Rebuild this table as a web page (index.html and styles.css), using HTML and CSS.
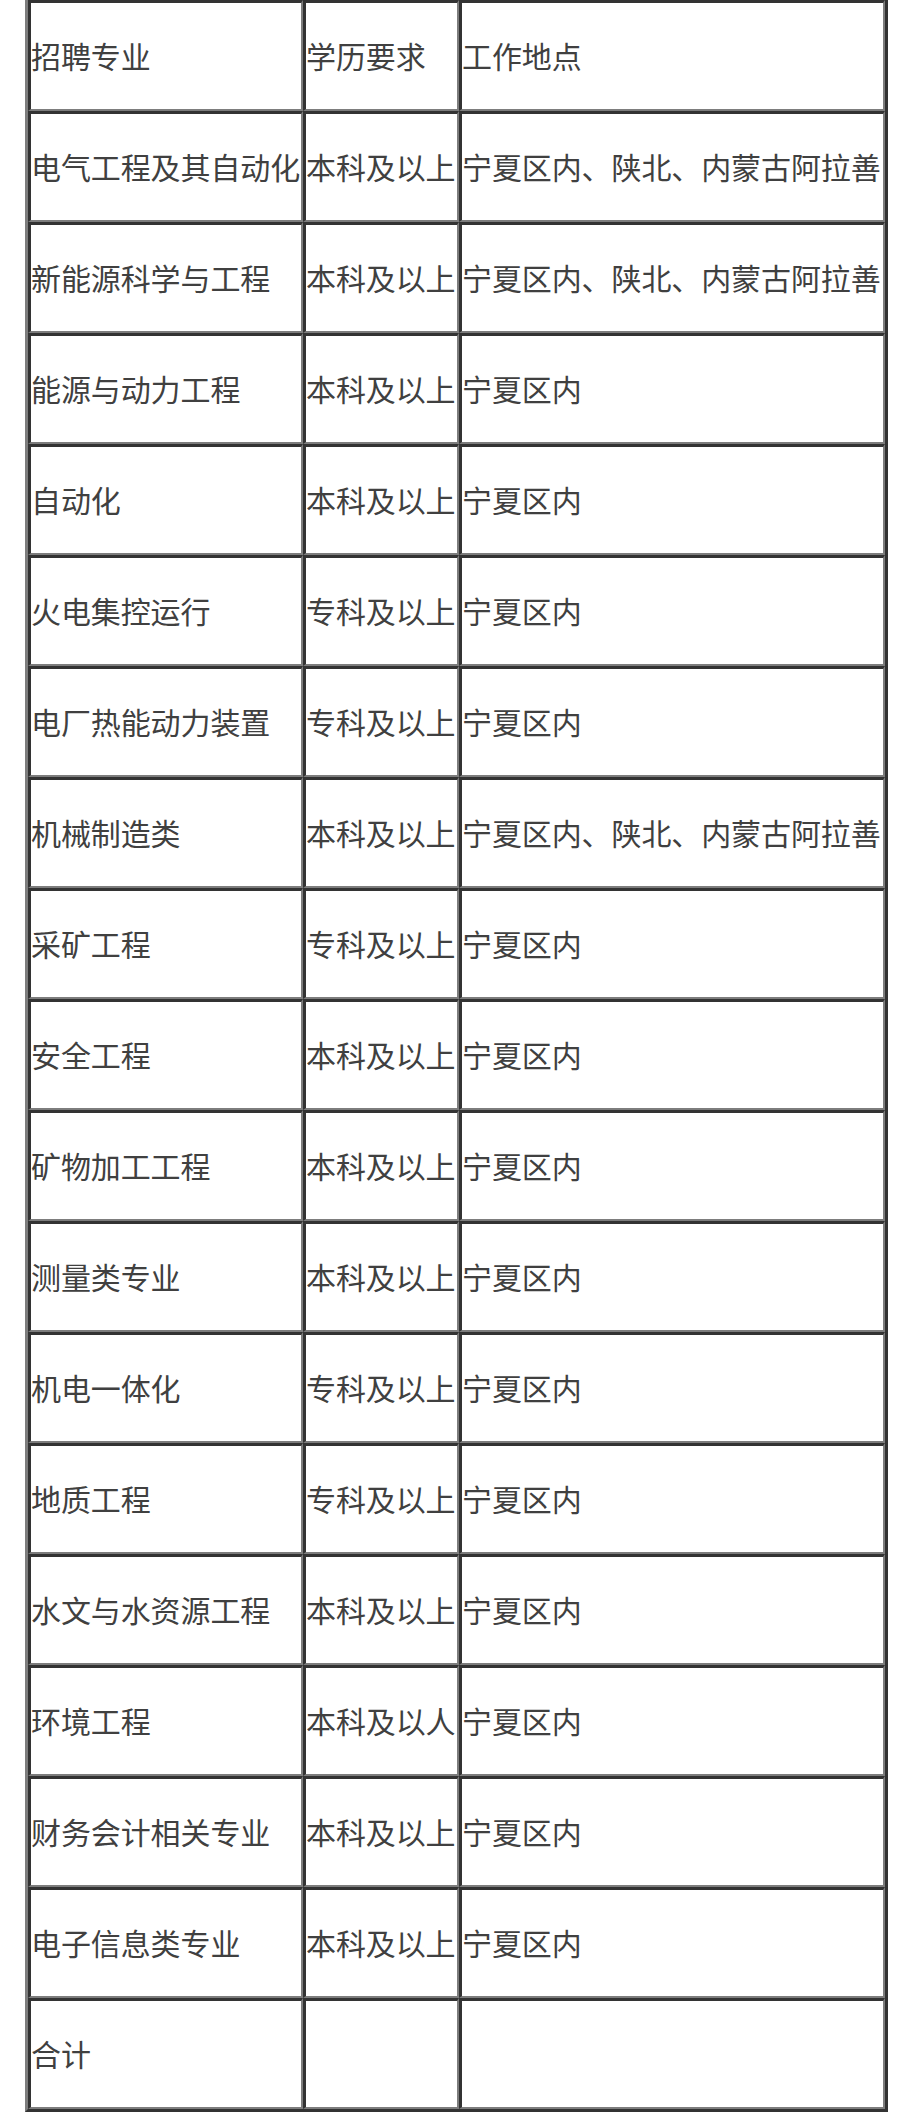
FILE: index.html
```html
<!DOCTYPE html>
<html lang="zh-CN">
<head>
<meta charset="utf-8">
<title>招聘专业</title>
<link rel="stylesheet" href="styles.css">
</head>
<body>
<table class="jobs">
  <colgroup>
    <col class="c-major">
    <col class="c-edu">
    <col class="c-loc">
  </colgroup>
  <tbody>
    <tr><td>招聘专业</td><td>学历要求</td><td>工作地点</td></tr>
    <tr><td>电气工程及其自动化</td><td>本科及以上</td><td>宁夏区内、陕北、内蒙古阿拉善</td></tr>
    <tr><td>新能源科学与工程</td><td>本科及以上</td><td>宁夏区内、陕北、内蒙古阿拉善</td></tr>
    <tr><td>能源与动力工程</td><td>本科及以上</td><td>宁夏区内</td></tr>
    <tr><td>自动化</td><td>本科及以上</td><td>宁夏区内</td></tr>
    <tr><td>火电集控运行</td><td>专科及以上</td><td>宁夏区内</td></tr>
    <tr><td>电厂热能动力装置</td><td>专科及以上</td><td>宁夏区内</td></tr>
    <tr><td>机械制造类</td><td>本科及以上</td><td>宁夏区内、陕北、内蒙古阿拉善</td></tr>
    <tr><td>采矿工程</td><td>专科及以上</td><td>宁夏区内</td></tr>
    <tr><td>安全工程</td><td>本科及以上</td><td>宁夏区内</td></tr>
    <tr><td>矿物加工工程</td><td>本科及以上</td><td>宁夏区内</td></tr>
    <tr><td>测量类专业</td><td>本科及以上</td><td>宁夏区内</td></tr>
    <tr><td>机电一体化</td><td>专科及以上</td><td>宁夏区内</td></tr>
    <tr><td>地质工程</td><td>专科及以上</td><td>宁夏区内</td></tr>
    <tr><td>水文与水资源工程</td><td>本科及以上</td><td>宁夏区内</td></tr>
    <tr><td>环境工程</td><td>本科及以人</td><td>宁夏区内</td></tr>
    <tr><td>财务会计相关专业</td><td>本科及以上</td><td>宁夏区内</td></tr>
    <tr><td>电子信息类专业</td><td>本科及以上</td><td>宁夏区内</td></tr>
    <tr><td>合计</td><td></td><td></td></tr>
  </tbody>
</table>
</body>
</html>
```
FILE: styles.css
```css
html, body {
  margin: 0;
  padding: 0;
  background: #ffffff;
}

body {
  font-family: "Noto Sans CJK SC", "Noto Sans", sans-serif;
  color: #404040;
}

.jobs {
  margin: -3px 0 0 25px;
  border-collapse: separate;
  border-spacing: 0;
  table-layout: fixed;
  width: 863px;
  border-style: solid;
  border-width: 3px;
  border-color: #7d7d7d #333333 #333333 #7d7d7d;
}

.c-major { width: 275px; }
.c-edu { width: 156px; }
.c-loc { width: 426px; }

.jobs td {
  box-sizing: border-box;
  height: 111px;
  padding: 0 0 3px 0;
  border-style: solid;
  border-width: 3px 2px 2px 3px;
  border-color: #333333 #7d7d7d #7d7d7d #333333;
  font-size: 30px;
  line-height: 40px;
  white-space: nowrap;
  vertical-align: middle;
  text-align: left;
  overflow: hidden;
  letter-spacing: -0.1px;
}
```
